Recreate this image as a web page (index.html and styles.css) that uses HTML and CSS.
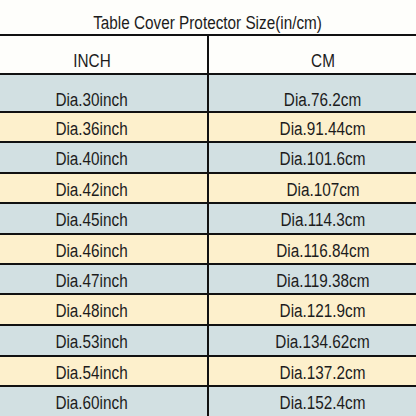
FILE: index.html
```html
<!DOCTYPE html>
<html lang="en">
<head>
<meta charset="utf-8">
<title>Table Cover Protector Size</title>
<link rel="stylesheet" href="styles.css">
</head>
<body>
<div class="sheet">
  <h1 class="title"><span class="sq">Table Cover Protector Size(in/cm)</span></h1>
  <div class="table">
    <div class="row head h37"><div class="cell l"><span class="sq">INCH</span></div><div class="cell r"><span class="sq">CM</span></div></div>
    <div class="row blue h36 low"><div class="cell l"><span class="sq">Dia.30inch</span></div><div class="cell r"><span class="sq">Dia.76.2cm</span></div></div>
    <div class="row yellow"><div class="cell l"><span class="sq">Dia.36inch</span></div><div class="cell r"><span class="sq">Dia.91.44cm</span></div></div>
    <div class="row blue h29"><div class="cell l"><span class="sq">Dia.40inch</span></div><div class="cell r"><span class="sq">Dia.101.6cm</span></div></div>
    <div class="row yellow"><div class="cell l"><span class="sq">Dia.42inch</span></div><div class="cell r"><span class="sq">Dia.107cm</span></div></div>
    <div class="row blue h29"><div class="cell l"><span class="sq">Dia.45inch</span></div><div class="cell r"><span class="sq">Dia.114.3cm</span></div></div>
    <div class="row yellow"><div class="cell l"><span class="sq">Dia.46inch</span></div><div class="cell r"><span class="sq">Dia.116.84cm</span></div></div>
    <div class="row blue"><div class="cell l"><span class="sq">Dia.47inch</span></div><div class="cell r"><span class="sq">Dia.119.38cm</span></div></div>
    <div class="row yellow h29"><div class="cell l"><span class="sq">Dia.48inch</span></div><div class="cell r"><span class="sq">Dia.121.9cm</span></div></div>
    <div class="row blue h29"><div class="cell l"><span class="sq">Dia.53inch</span></div><div class="cell r"><span class="sq">Dia.134.62cm</span></div></div>
    <div class="row yellow"><div class="cell l"><span class="sq">Dia.54inch</span></div><div class="cell r"><span class="sq">Dia.137.2cm</span></div></div>
    <div class="row blue h29"><div class="cell l"><span class="sq">Dia.60inch</span></div><div class="cell r"><span class="sq">Dia.152.4cm</span></div></div>
  </div>
</div>
</body>
</html>
```
FILE: styles.css
```css
html, body {
  margin: 0;
  padding: 0;
  background: #fefefb;
  overflow: hidden;
}
body {
  width: 416px;
  height: 416px;
  font-family: "Liberation Sans", Arial, sans-serif;
  font-size: 18px;
  line-height: 20px;
  color: #1c1c1c;
}
.sheet {
  width: 416px;
}
.sq {
  display: inline-block;
  transform: scaleX(0.85);
  white-space: nowrap;
}
.title {
  margin: 0;
  height: 34px;
  box-sizing: border-box;
  padding-top: 13px;
  font-size: 18px;
  font-weight: normal;
  text-align: center;
}
.table {
  border-top: 2px solid #111;
}
.row {
  display: grid;
  grid-template-columns: 209px 1fr;
  height: 28px;
  border-bottom: 2px solid #111;
}
.row.h29 { height: 29px; }
.row.h36 { height: 36px; }
.row.h37 { height: 37px; }
.row.blue { background: #d2e0e2; }
.row.yellow { background: #fdf0cc; }
.cell {
  box-sizing: border-box;
  text-align: center;
  padding-top: 6px;
}
.head .cell,
.low .cell {
  padding-top: 15px;
}
.cell.l {
  border-right: 2px solid #111;
  padding-right: 24px;
}
.cell.r {
  padding-left: 21px;
}
```
